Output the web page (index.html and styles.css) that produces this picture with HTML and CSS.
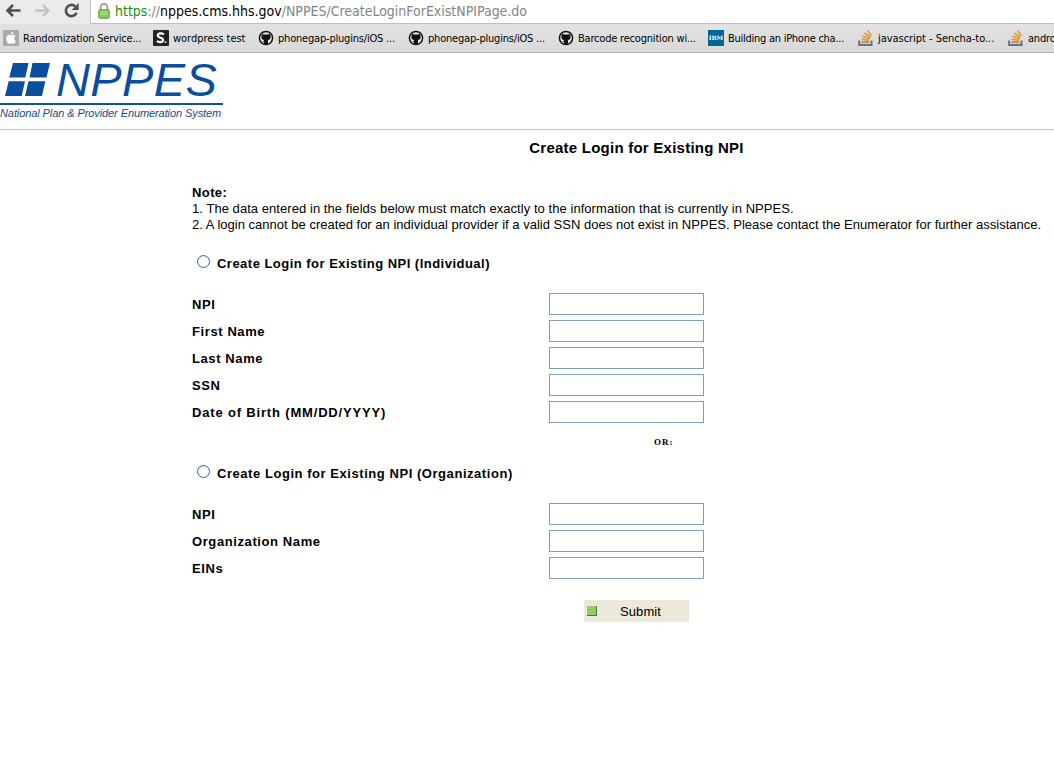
FILE: index.html
```html
<!DOCTYPE html>
<html lang="en">
<head>
<meta charset="utf-8">
<title>NPPES - Create Login for Existing NPI</title>
<link rel="stylesheet" href="styles.css">
</head>
<body>
<svg class="defs" width="0" height="0">
  <symbol id="cat" viewBox="0 0 16 16"><circle cx="8" cy="8" r="6.6" fill="#e8e8e8" stroke="#111" stroke-width="1.5"/><path d="M4 3.5L6 4.5H10L12 3.5L12.7 7C12.5 9 11.5 9.8 10 10V14.3H6V12.5L4.3 11.2L6 11.2V10C4.5 9.8 3.5 9 3.3 7Z" fill="#111"/></symbol>
  <symbol id="stack" viewBox="0 0 16 16"><path d="M1.2 10.5V15H13.5V10.5" fill="none" stroke="#68717c" stroke-width="2"/><path d="M3.5 12.2H11.2" stroke="#a38a70" stroke-width="1.8"/><path d="M3.5 9.2L11 10.6M4.5 6L11.7 9.2M6.5 3L12.3 7.7M9.8 .5L13.3 6" stroke="#ed9732" stroke-width="1.8"/></symbol>
</svg>
<header class="browser">
  <div class="toolbar">
    <svg class="nav" width="90" height="24" viewBox="0 0 90 24">
      <path d="M20.5 10.5H8M13 5L7.5 10.5L13 16" fill="none" stroke="#505050" stroke-width="2.6"/>
      <path d="M35 10.5H47.5M43 5L48.5 10.5L43 16" fill="none" stroke="#c2c2c2" stroke-width="2.4"/>
      <path d="M75.3 6.4A5.6 5.6 0 1 0 76.6 12.8" fill="none" stroke="#505050" stroke-width="2.6"/>
      <path d="M78.6 3V10H71.6Z" fill="#505050"/>
    </svg>
    <div class="address">
      <svg class="lock" width="12" height="17" viewBox="0 0 12 17"><path d="M2.6 9V5.2A3.4 3.4 0 0 1 9.4 5.2V9" fill="none" stroke="#999" stroke-width="1.8"/><rect x=".8" y="7.8" width="10.4" height="8.4" rx="1" fill="#85ca5b" stroke="#5a9c39"/><path d="M2 9.8H10M2 12H10" stroke="#b3e293"/></svg>
      <span class="url"><span class="secure">https</span><span class="path">://</span>nppes.cms.hhs.gov<span class="path">/NPPES/CreateLoginForExistNPIPage.do</span></span>
    </div>
  </div>
  <nav class="bookmarks">
    <a class="bm"><svg width="16" height="16"><path d="M0 0H16V16H0Z" fill="#aaa"/><path d="M8 5.2C6 4.2 3.3 5 3.3 8.2C3.3 11 5 13.8 6.3 13.8C7.2 13.8 7.5 13.3 8.3 13.3S9.5 13.8 10.2 13.8C11.5 13.8 12.4 12.2 12.8 11C10.8 10 10.8 7.3 12.5 6.3C11.2 4.4 9.4 4.7 8 5.2ZM8 4.5C7.8 3 8.8 1.8 10.3 1.6C10.4 3 9.5 4.4 8 4.5Z" fill="#fff"/></svg><span class="title">Randomization Service...</span></a>
    <a class="bm second"><svg width="16" height="16"><rect width="16" height="16" rx="1" fill="#222"/><path d="M10.8 4.6C9.7 2.9 4.8 2.8 4.8 5.6C4.8 8.3 10 7.2 10 10C10 12.7 5.3 12.6 4 10.9" fill="none" stroke="#fff" stroke-width="2.2"/><rect x="11.5" y="11" width="2" height="2" fill="#6ad1b8"/></svg><span class="title loose">wordpress test</span></a>
    <a class="bm"><svg width="16" height="16"><use href="#cat"/></svg><span class="title">phonegap-plugins/iOS ...</span></a>
    <a class="bm"><svg width="16" height="16"><use href="#cat"/></svg><span class="title">phonegap-plugins/iOS ...</span></a>
    <a class="bm"><svg width="16" height="16"><use href="#cat"/></svg><span class="title">Barcode recognition wi...</span></a>
    <a class="bm"><span class="ibm">IBM</span><span class="title tight">Building an iPhone cha...</span></a>
    <a class="bm"><svg width="16" height="16"><use href="#stack"/></svg><span class="title loose">javascript - Sencha-to...</span></a>
    <a class="bm"><svg width="16" height="16"><use href="#stack"/></svg><span class="title">andro</span></a>
  </nav>
</header>
<div class="masthead">
  <div class="brand">
    <svg class="mark" width="46" height="35" viewBox="0 0 46 35"><path d="M8 1H23.5L20.3 15.5H4.2ZM27.5 1H45L41.5 15.5H24.5ZM3.7 19.3H20L16.7 34H0ZM23.5 19.3H40.3L37 34H20Z" fill="#0a4f9e"/></svg>
    <span class="wordmark">NPPES</span>
  </div>
  <div class="tagline"><span>National Plan &amp; Provider Enumeration System</span></div>
</div>
<main>
  <h1><span>Create Login for Existing NPI</span></h1>
  <div class="notes">
    <b>Note:</b>
    <p>1. The data entered in the fields below must match exactly to the information that is currently in NPPES.</p>
    <p class="long">2. A login cannot be created for an individual provider if a valid SSN does not exist in NPPES. Please contact the Enumerator for further assistance.</p>
  </div>
  <form>
    <label class="choice"><input type="radio" name="kind"><span class="individual">Create Login for Existing NPI (Individual)</span></label>
    <div class="fields">
      <label><span class="name">NPI</span><input type="text"></label>
      <label><span class="name">First Name</span><input type="text"></label>
      <label><span class="name">Last Name</span><input type="text"></label>
      <label><span class="name">SSN</span><input type="text"></label>
      <label><span class="name birth">Date of Birth (MM/DD/YYYY)</span><input type="text"></label>
    </div>
    <div class="or">OR:</div>
    <label class="choice"><input type="radio" name="kind"><span>Create Login for Existing NPI (Organization)</span></label>
    <div class="fields">
      <label><span class="name">NPI</span><input type="text"></label>
      <label><span class="name">Organization Name</span><input type="text"></label>
      <label><span class="name">EINs</span><input type="text"></label>
    </div>
    <button type="button" class="submit"><i></i><span>Submit</span></button>
  </form>
</main>
</body>
</html>
```
FILE: styles.css
```css
* { box-sizing: border-box; }
body { margin: 0; height: 769px; overflow: hidden; background: #fff; color: #000; font: 13px/16px "Liberation Sans", Arial, sans-serif; }
.defs { display: block; }
.browser { height: 53px; overflow: hidden; background: #e3e3e3; border-bottom: 1px solid #b5b5b5; font-family: "DejaVu Sans Condensed", "DejaVu Sans", sans-serif; }
.toolbar { display: flex; height: 24px; background: #ebebeb; }
.nav { flex: none; }
.address { display: flex; flex: 1; height: 24px; padding-left: 7px; background: #fff; border-left: 1px solid #c5c5c5; border-bottom: 1px solid #bfbfbf; }
.lock { margin-top: 2px; flex: none; }
.url { margin-left: 5px; font: 14px/22px "DejaVu Sans Condensed", "DejaVu Sans", sans-serif; letter-spacing: -.01px; white-space: nowrap; }
.secure { color: #169116; }
.path { color: #858585; }
.bookmarks { display: flex; height: 29px; padding-left: 3px; background: linear-gradient(#e2e2e2, #d9d9d9); }
.bm { display: flex; flex: none; align-items: center; gap: 4px; width: 150px; height: 28px; font-size: 11px; line-height: 16px; letter-spacing: -.2px; white-space: nowrap; }
.bm:last-child { width: 48px; }
.second { width: 105px; }
.title { padding-top: 2px; }
.loose { letter-spacing: -.04px; }
.tight { letter-spacing: -.26px; }
.ibm { display: flex; justify-content: center; width: 16px; height: 16px; background: #006699; color: #fff; font: bold 6px/16px "DejaVu Serif", serif; letter-spacing: 0; }
.masthead { height: 77px; padding-top: 8px; border-bottom: 1px solid #f0c650; }
.brand { display: flex; height: 42px; padding-left: 5px; }
.mark { margin-top: 1px; flex: none; }
.wordmark { margin: -3px 0 0 5px; font: italic 47px/43px "Liberation Sans", sans-serif; letter-spacing: .4px; color: #0a4f9e; }
.tagline { width: 223px; height: 20px; border-top: 2px solid #0a5399; color: #194b82; font: italic 11px/17px "Liberation Sans", sans-serif; letter-spacing: -.09px; white-space: nowrap; }
main { padding-left: 192px; }
h1 { width: 889px; margin: 0; padding-top: 9px; font-size: 15px; line-height: 18px; font-weight: bold; text-align: center; letter-spacing: .24px; }
.notes { margin-top: 28px; white-space: nowrap; }
.notes b { display: block; letter-spacing: .4px; }
.notes p { margin: 0; letter-spacing: .055px; }
.notes .long { letter-spacing: .015px; }
.choice { display: flex; height: 16px; margin-top: 22px; font-weight: bold; letter-spacing: .55px; }
.choice span { padding-top: 1px; }
.individual { letter-spacing: .48px; }
input[type=radio] { appearance: none; width: 13px; height: 13px; margin: 0 7px 0 5px; border: 1px solid #416b8e; border-radius: 50%; background: radial-gradient(circle at 65% 65%, #fff 35%, #d9dedb); }
.fields { display: grid; gap: 5px; margin-top: 22px; font-weight: bold; letter-spacing: .6px; }
.fields label { display: flex; align-items: center; height: 22px; }
.fields .name { width: 357px; padding-top: 2px; }
.fields .birth { letter-spacing: .83px; }
input[type=text] { width: 155px; height: 22px; padding: 0; border: 1px solid #7f9db9; background: #fff; }
.or { height: 14px; margin: 12px 0 0 462px; font: bold 9px/14px "Liberation Serif", serif; letter-spacing: 1px; }
.or + .choice { margin-top: 16px; }
.submit { display: flex; align-items: center; width: 105px; height: 22px; margin: 21px 0 0 392px; padding: 0 0 0 3px; border: 0; background: #ece9d8; color: #000; font: 13px/16px "Liberation Sans", sans-serif; letter-spacing: .1px; }
.submit span { padding-top: 2px; }
.submit i { width: 10px; height: 10px; margin-right: 23px; background: #93cc65; border: solid #47752b; border-width: 0 1px 1px 0; }
```
